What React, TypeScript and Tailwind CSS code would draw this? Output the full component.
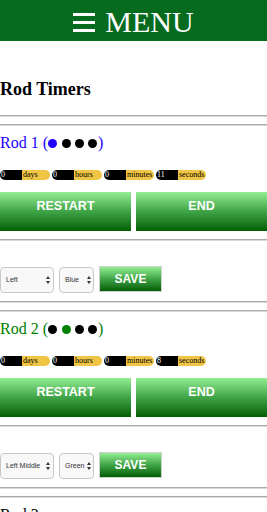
import type { FC } from 'react';

const serif = "font-['Liberation_Serif',serif]";
const sans = "font-['Liberation_Sans',Arial,sans-serif]";

const Rule: FC = () => (
  <div className="h-[2px] border-t border-t-[#a9a9a9] border-b border-b-[#d9d9d9]" />
);

const Arrows: FC = () => (
  <svg width="4" height="8" viewBox="0 0 4 8" className="shrink-0">
    <path d="M2 0 L4 3 L0 3 Z" fill="#333" />
    <path d="M0 5 L4 5 L2 8 Z" fill="#333" />
  </svg>
);

interface PillProps {
  value: string;
  label: string;
}

const Pill: FC<PillProps> = ({ value, label }) => (
  <div className={`flex h-[10px] text-[8px] leading-[10px] ${serif}`}>
    <span className="w-[22px] bg-black rounded-l-full text-white pl-[1px]">{value}</span>
    <span className="w-[28px] bg-[#f0c444] rounded-r-full text-black pl-[1px]">{label}</span>
  </div>
);

interface RodProps {
  name: string;
  color: string;
  active: number;
  seconds: string;
  position: string;
  colour: string;
}

const btn =
  'bg-linear-to-b from-[#93ee93] via-[#3fa447] to-[#005f00] text-white font-bold';

const Rod: FC<RodProps> = ({ name, color, active, seconds, position, colour }) => (
  <div className="flex flex-col">
    <div className={`mt-[7px] h-[20px] text-[16px] leading-[20px] ${serif}`} style={{ color }}>
      {name} (
      {[0, 1, 2, 3].map((i) => (
        <span
          key={i}
          className={`inline-block w-[9px] h-[9px] rounded-full ${i === 0 ? 'ml-0' : i === 1 ? 'ml-[5px]' : 'ml-[4px]'}`}
          style={{ backgroundColor: i === active ? color : '#000' }}
        />
      ))}
      <span className="ml-[1px]">)</span>
    </div>

    <div className="mt-[17px] flex gap-[2px]">
      <Pill value="0" label="days" />
      <Pill value="0" label="hours" />
      <Pill value="0" label="minutes" />
      <Pill value={seconds} label="seconds" />
    </div>

    <div className={`mt-[12px] flex gap-[5px] ${sans}`}>
      <button type="button" className={`flex-1 h-[39px] text-[12.5px] leading-[15px] pb-[10px] ${btn}`}>
        RESTART
      </button>
      <button type="button" className={`flex-1 h-[39px] text-[12.5px] leading-[15px] pb-[10px] ${btn}`}>
        END
      </button>
    </div>

    <div className="mt-[8px]">
      <Rule />
    </div>

    <div className={`mt-[25px] flex items-start gap-[5px] ${sans}`}>
      <div className="mt-[1px] w-[54px] h-[26px] rounded-[4px] border border-[#c8c8c8] bg-[#f8f8f8] flex items-center justify-between pl-[5px] pr-[3px] text-[7px] text-[#333]">
        <span>{position}</span>
        <Arrows />
      </div>
      <div className="mt-[1px] w-[35px] h-[26px] rounded-[4px] border border-[#c8c8c8] bg-[#f8f8f8] flex items-center justify-between pl-[5px] pr-[2px] text-[7px] text-[#333]">
        <span>{colour}</span>
        <Arrows />
      </div>
      <button
        type="button"
        className={`w-[63px] h-[26px] border border-[#cfcfcf] text-[12px] leading-[14px] ${btn}`}
      >
        SAVE
      </button>
    </div>

    <div className="mt-[8px]">
      <Rule />
    </div>
    <div className="mt-[7px]">
      <Rule />
    </div>
  </div>
);

export default function App() {
  return (
    <div className="w-[267px] h-[512px] overflow-hidden bg-white">
      <div className={`h-[41px] bg-[#066b1f] flex items-center justify-center gap-[10px] text-white ${serif}`}>
        <div className="flex flex-col gap-[5px] w-[22px] mt-[3px]">
          <div className="h-[3px] bg-white" />
          <div className="h-[3px] bg-white" />
          <div className="h-[3px] bg-white" />
        </div>
        <span className="text-[30px] leading-[34px] mt-[2px]">MENU</span>
      </div>

      <h3 className={`mt-[37px] text-[18px] leading-[22px] font-bold text-black ${serif}`}>Rod Timers</h3>

      <div className="mt-[15px]">
        <Rule />
      </div>
      <div className="mt-[7px]">
        <Rule />
      </div>

      <Rod name="Rod 1" color="#2200ff" active={0} seconds="11" position="Left" colour="Blue" />
      <Rod name="Rod 2" color="#008000" active={1} seconds="8" position="Left Middle" colour="Green" />

      <div className={`mt-[7px] h-[20px] text-[16px] leading-[20px] text-black ${serif}`}>Rod 3</div>
    </div>
  );
}
